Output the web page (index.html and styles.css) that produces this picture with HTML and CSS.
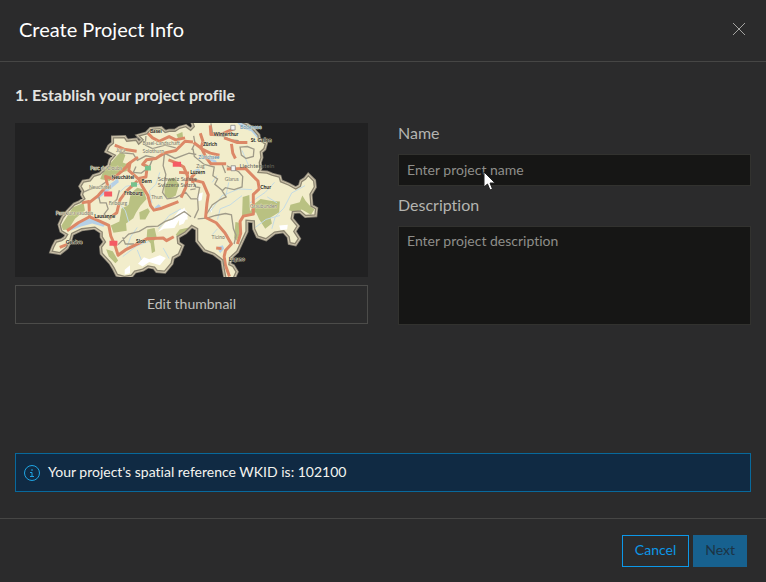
FILE: index.html
```html
<!DOCTYPE html>
<html lang="en">
<head>
  <meta charset="UTF-8" />
  <meta name="viewport" content="width=device-width, initial-scale=1.0"/>
  <title>Create Project Info</title>
  <link rel="stylesheet" href="styles.css">
</head>
<body>

  <form class="dialog">
    <header class="dialog-header">
      <h1>Create Project Info</h1>
      <button type="button" class="close-btn" aria-label="Close">
        <svg width="14" height="14" viewBox="0 0 14 14"><path d="M1 1l12 12M13 1L1 13" /></svg>
      </button>
    </header>

    <main class="dialog-body">
      <h2>1. Establish your project profile</h2>

      <div class="profile">
        <div class="thumbnail">
          <svg class="map" viewBox="15 21 1065 465" role="img" aria-label="Map of Switzerland">
            <defs>
              <path id="country" d="M127 408L132 395 140 380 156 376 167 369 174 357 156 346 151 328 160 308 174 290 195 268 211 261 226 250 219 237 222 226 214 212 222 199 242 196 253 182 272 176 300 150 304 134 318 118 293 106 300 92 312 82 312 66 345 65 352 76 380 73 388 85 402 72 390 60 412 54 425 40 455 38 468 50 480 46 498 46 512 37 530 32 545 43 556 32 550 15H690L712 26 730 38 748 58 750 72 770 84 766 98 755 108 757 125 752 140 754 158 748 170 775 172 790 178 812 184 816 198 840 208 862 220 876 212 880 198 892 190 900 180 916 196 918 214 905 236 908 272 922 280 920 298 892 300 876 286 852 288 848 310 866 332 856 348 870 370 860 385 845 382 842 364 826 346 798 350 772 370 748 362 738 340 737 316 712 314 712 348 696 382 684 408 664 426 660 448 672 454 682 470 672 492H652L646 460 642 434 616 414 588 404 566 376 566 340 548 330 528 350 504 364 506 384 518 392 508 416 490 426 486 444 466 468 444 466 436 456 416 452 400 462 376 468 366 480 345 484 324 478 314 458 304 442 278 414 276 396 288 380 278 364 278 350 256 335 216 340 186 354 180 376 170 396 150 412Z" />
              <clipPath id="inside"><use href="#country" /></clipPath>
            </defs>

            <use href="#country" class="edge-outer" />
            <use href="#country" class="edge-light" />
            <use href="#country" class="land" />

            <g clip-path="url(#inside)">
              <!-- parks and forest -->
              <g class="forest">
                <path d="M155 330L190 275 222 262 226 285 196 310 176 342 160 344Z" />
                <path d="M280 170L318 125 336 106 348 118 340 140 360 148 352 166 318 176 300 196 272 190Z" />
                <path d="M364 234L384 216 402 222 412 250 394 270 380 292 372 308 350 324 352 346 312 352 304 330 330 318 336 280 358 268Z" />
                <path d="M390 290L416 278 422 288 408 312 392 312Z" />
                <path d="M414 342L436 338 442 364 434 378 438 408 428 414 424 384 412 372Z" />
                <path d="M290 402L310 408 326 436 318 444 298 424Z" />
                <path d="M466 214L480 190 494 186 510 206 500 240 480 250 466 240Z" />
                <path d="M500 358L512 342 540 336 530 354 510 370Z" />
                <path d="M502 56L520 48 522 64 508 70Z" />
                <path d="M702 244L722 238 724 288 736 266 756 250 790 256 814 258 812 290 786 306 790 324 770 340 752 312 742 290 728 300 700 302Z" />
                <path d="M680 320L692 322 694 352 684 376 676 368Z" />
                <path d="M846 268L874 260 882 240 892 256 904 270 918 282 908 298 880 282 860 290 842 284Z" />
              </g>

              <!-- snow -->
              <g class="snow">
                <path d="M446 350L468 322 490 310 514 280 534 288 536 312 510 314 496 338 464 340Z" />
                <path d="M386 446L404 426 420 432 452 420 470 428 452 450 420 440 400 454ZM346 464L362 450 362 474 346 478Z" />
                <path d="M510 290L526 276 536 300 524 324 510 330ZM566 236L582 230 578 254 564 258ZM812 330L838 328 836 342 816 344ZM600 280L610 276 608 292Z" />
              </g>

              <!-- lakes and rivers -->
              <g class="lake">
                <path d="M182 346L212 316 248 308 292 322 282 334 248 324 212 334Z" />
                <path d="M256 246L298 208 326 188 328 200 296 226 266 250ZM306 190L326 182 324 192ZM436 276L448 266 456 272 440 282Z" />
                <path d="M680 15L716 22 754 54 746 66 728 46 700 36ZM576 114L622 134 624 142 590 132ZM552 164L570 158 580 176 562 174ZM624 396L642 390 646 400 634 414Z" />
              </g>
              <path class="river" d="M428 262L420 226 440 206 452 170M448 340L480 300 516 280M340 424L382 392 420 378M350 404L364 364 384 336M602 290L640 240 690 220 730 222M626 312L634 280 664 268 700 240M724 262L770 230 798 200M790 340L800 304 826 278 850 232 890 210M740 336L772 312 814 300M634 338L656 356 660 380M610 358L626 340M330 230L350 212 398 204M358 320L348 286 330 264M610 200L624 180M720 150L700 104M660 200L650 246M776 244L806 262M396 434L384 404M480 430L462 398" />

              <!-- canton borders -->
              <path class="border" d="M220 230L244 220 268 214 290 198M268 244L272 262 290 262 296 280 284 296 302 312M330 224L322 252 304 268M330 110L372 114 384 134 410 120 440 126 470 114 498 128 540 112 562 116M410 60L408 88 430 98 468 88 500 96M466 112L462 150 470 176 466 206 460 230 474 250 500 246 530 230 546 250 566 250 568 282 556 308M326 388L358 356 390 348 414 334 446 332 468 318 490 310 526 288 546 304M340 366L348 386 374 386M380 152L372 170 396 172 420 154 430 130M566 310L594 308 620 300 650 294 668 298 674 340 682 360 676 386M594 294L610 268 634 252 652 244 640 226 650 216 676 222 700 214 702 182 690 168 654 150M552 98L556 122 586 146 616 154 612 180 626 190 618 206 640 224M548 190L560 214 572 216 566 248M694 94L716 92 736 100 734 122 712 128 698 118ZM606 22L612 58 640 60 666 72 690 74M554 60L558 82 548 102M640 146L650 172M544 222L560 220" />

              <!-- motorways -->
              <g class="road">
                <path d="M150 396L176 386M172 346L206 322 240 304 272 318 298 330 304 362 318 394 326 420 348 404 388 384 414 370 462 368 472 376 494 364" />
                <path d="M240 304L238 258 216 262M238 262L266 240 294 208 288 182 310 190 344 160 362 142 358 164 388 190 398 210 416 240 424 270 434 284 458 278 508 258" />
                <path d="M300 308L322 292 332 252 350 228 384 196M388 188L410 184 414 152 400 146 412 132 440 128 464 112 500 104 528 76 552 78M352 148L386 124M316 88L344 100 382 106M410 46L430 66 450 76 480 62 500 72 528 66" />
                <path d="M574 52L582 76 576 98 604 112 632 118M554 80L578 98 592 126 606 144 652 144M604 28L606 56 640 54 676 38M646 66L686 80 716 80M668 84L672 112 680 128M478 132L504 142 524 154 536 182 530 216 516 246M560 172L548 184 552 202M510 170L540 172" />
                <path d="M540 190L582 200 598 238 594 264 590 306 622 322 648 352 668 386 650 406 646 424 650 450 662 484M654 160L710 158 748 196 752 220 734 236 734 296 704 302 694 318 696 354 686 386M622 398L638 400" />
              </g>
            </g>

            <use href="#country" class="edge-inner" />

            <!-- road shields -->
            <g class="shields">
              <path class="red" d="M284 228h24v15h-24ZM300 376h24v15h-24ZM491 138h25v15h-25Z" />
              <path class="green" d="M407 150h18v14h-18ZM365 200h18v13h-18Z" />
              <path class="white" d="M667 150h13v15h-13ZM666 28h13v14h-13Z" />
            </g>

            <g class="cantons">
              <text x="400" y="88">Basel-Landschaft</text>
              <text x="400" y="112">Solothurn</text>
              <text x="242" y="164">Parc du Doubs</text>
              <text x="138" y="299">Parc Jura vaudois</text>
              <text x="238" y="221">Neuchatel</text>
              <text x="298" y="269">Fribourg</text>
              <text x="426" y="250">Thun</text>
              <text x="320" y="108">Jura</text>
              <text x="562" y="157">Zug</text>
              <text x="648" y="196">Glarus</text>
              <text x="608" y="371">Ticino</text>
              <text x="724" y="277">Graubunden</text>
            </g>
            <g class="countries">
              <text x="446" y="196">Schweiz Suisse</text>
              <text x="446" y="215">Svizzera Svizra</text>
              <text x="692" y="156">Liechtenstein</text>
            </g>
            <g class="cities">
              <text x="422" y="50">Basel</text>
              <text x="614" y="61">Winterthur</text>
              <text x="582" y="89">Zürich</text>
              <text x="726" y="77">St. Gallen</text>
              <text x="306" y="190">Neuchâtel</text>
              <text x="396" y="201">Bern</text>
              <text x="344" y="237">Fribourg</text>
              <text x="254" y="309">Lausanne</text>
              <text x="168" y="386">Genève</text>
              <text x="380" y="383">Sion</text>
              <text x="544" y="176">Luzern</text>
              <text x="755" y="221">Chur</text>
              <text x="660" y="438">Lugano</text>
            </g>
            <g class="waters">
              <text x="694" y="39">Bodensee</text>
              <text x="568" y="130">Zürichsee</text>
            </g>
          </svg>
          <button type="button" class="edit-btn">Edit thumbnail</button>
        </div>

        <div class="fields">
          <label for="projectName">Name</label>
          <div class="name-field">
            <input type="text" id="projectName" placeholder="Enter project name" />
            <svg class="cursor" width="13" height="20" viewBox="0 0 13 20"><path d="M1 1v15l3.500-3 2.500 6 2.500-1-2.500-6h5Z" /></svg>
          </div>
          <label for="projectDescription">Description</label>
          <textarea id="projectDescription" placeholder="Enter project description"></textarea>
        </div>
      </div>

      <div class="notice">
        <svg width="16" height="16" viewBox="0 0 16 16">
          <circle cx="8" cy="8" r="7.500" />
          <path d="M8 4v2M6 7.500h2v4M6 11.500h4" />
        </svg>
        <span>Your project's spatial reference WKID is: 102100</span>
      </div>
    </main>

    <footer class="dialog-footer">
      <button type="button" class="cancel-btn">Cancel</button>
      <button type="submit" class="next-btn" disabled>Next</button>
    </footer>
  </form>

</body>
</html>
```

FILE: styles.css
```css
* {
  margin: 0;
  padding: 0;
  box-sizing: border-box;
}

body {
  font-family: Lato, "Open Sans", sans-serif;
  font-size: 14px;
  line-height: 20px;
  font-variant-ligatures: none;
  background-color: #2b2b2c;
  color: #c8c8c4;
}

button, input, textarea {
  font: inherit;
}

.dialog {
  display: flex;
  flex-direction: column;
  min-height: 100vh;
}

.dialog-header {
  display: flex;
  justify-content: space-between;
  align-items: center;
  height: 62px;
  padding: 0 20px 4px 19px;
  border-bottom: 1px solid #464645;
}

.dialog-header h1 {
  font-size: 20px;
  font-weight: 400;
  color: #fff;
}

.close-btn {
  display: flex;
  background: none;
  border: none;
  cursor: pointer;
}

.close-btn svg {
  stroke: #a4a4a2;
  fill: none;
}

.dialog-body {
  flex: 1;
  display: flex;
  flex-direction: column;
  padding: 23px 15px 26px;
}

.dialog-body h2 {
  font-size: 16px;
  font-weight: 700;
  color: #e4e4e0;
  margin-bottom: 18px;
}

.profile {
  display: flex;
  gap: 30px;
  margin-bottom: 24px;
}

.thumbnail, .fields {
  flex: 1;
  display: flex;
  flex-direction: column;
}

.map {
  display: block;
  width: 100%;
  background: #212122;
  margin-bottom: 8px;
}

.edit-btn {
  height: 39px;
  padding-bottom: 2px;
  background: none;
  border: 1px solid #4c4c4a;
  color: #c0c0bc;
  cursor: pointer;
}

.fields label {
  font-size: 16px;
  color: #b4b4b0;
  margin-bottom: 11px;
}

.name-field {
  position: relative;
  margin-bottom: 9px;
}

.fields input, .fields textarea {
  display: block;
  width: 100%;
  background: #161615;
  border: 1px solid #32322f;
  color: #e4e4e0;
  padding: 4px 8px 6px;
  outline: none;
}

.fields input {
  height: 32px;
}

.fields textarea {
  height: 99px;
  resize: none;
}

.fields input::placeholder, .fields textarea::placeholder {
  color: #8e8e8a;
}

/* mouse pointer over the name box */
.cursor {
  position: absolute;
  left: 85px;
  top: 17px;
  fill: #fff;
  stroke: #222;
}

.notice {
  display: flex;
  align-items: center;
  gap: 8px;
  min-height: 39px;
  margin-top: auto;
  padding: 0 8px;
  background: #102a43;
  border: 1px solid #08699c;
  color: #f4f4f0;
}

.notice span {
  padding-bottom: 2px;
}

.notice svg {
  fill: none;
  stroke: #1fa5e4;
}

.dialog-footer {
  display: flex;
  justify-content: flex-end;
  gap: 4px;
  padding: 16px 19px 15px;
  border-top: 1px solid #464645;
}

.dialog-footer button {
  height: 32px;
  padding: 0 12px 2px;
  border: 1px solid #0c97e8;
}

.dialog-footer .cancel-btn {
  background: none;
  color: #0c97e8;
  cursor: pointer;
}

.dialog-footer .next-btn {
  padding: 0 11px 2px;
  background: #17618f;
  border-color: #17618f;
  color: #1c3344;
}

/* map drawing */
.edge-outer {
  fill: none;
  stroke: #8e8879;
  stroke-width: 15;
}

.edge-light {
  fill: none;
  stroke: #cfc5ac;
  stroke-width: 10;
}

.land {
  fill: #f2edcb;
  stroke: none;
}

.edge-inner {
  fill: none;
  stroke: #8d8672;
  stroke-width: 4;
}

.forest {
  fill: #b9c182;
}

.snow {
  fill: #fff;
}

.lake {
  fill: #b5d0e6;
}

.river {
  fill: none;
  stroke: #c4dbe4;
  stroke-width: 3;
}

.border {
  fill: none;
  stroke: #a09b89;
  stroke-width: 4;
}

.road {
  fill: none;
  stroke: #dc8867;
  stroke-width: 9;
  stroke-linejoin: round;
}

.shields .red {
  fill: #f55b64;
}

.shields .green {
  fill: #75c28e;
}

.shields .white {
  fill: #f4f4f4;
  stroke: #777;
  stroke-width: 2;
}

.map text {
  font-size: 15px;
  paint-order: stroke;
  stroke: #f2edcb;
  stroke-width: 2;
}

.cantons {
  fill: #77776b;
}

.countries {
  fill: #65655c;
}

.map .countries text {
  font-size: 18px;
  stroke: none;
}

.cities {
  fill: #222;
  font-weight: 700;
}

.waters {
  fill: #4d83b5;
}
```
